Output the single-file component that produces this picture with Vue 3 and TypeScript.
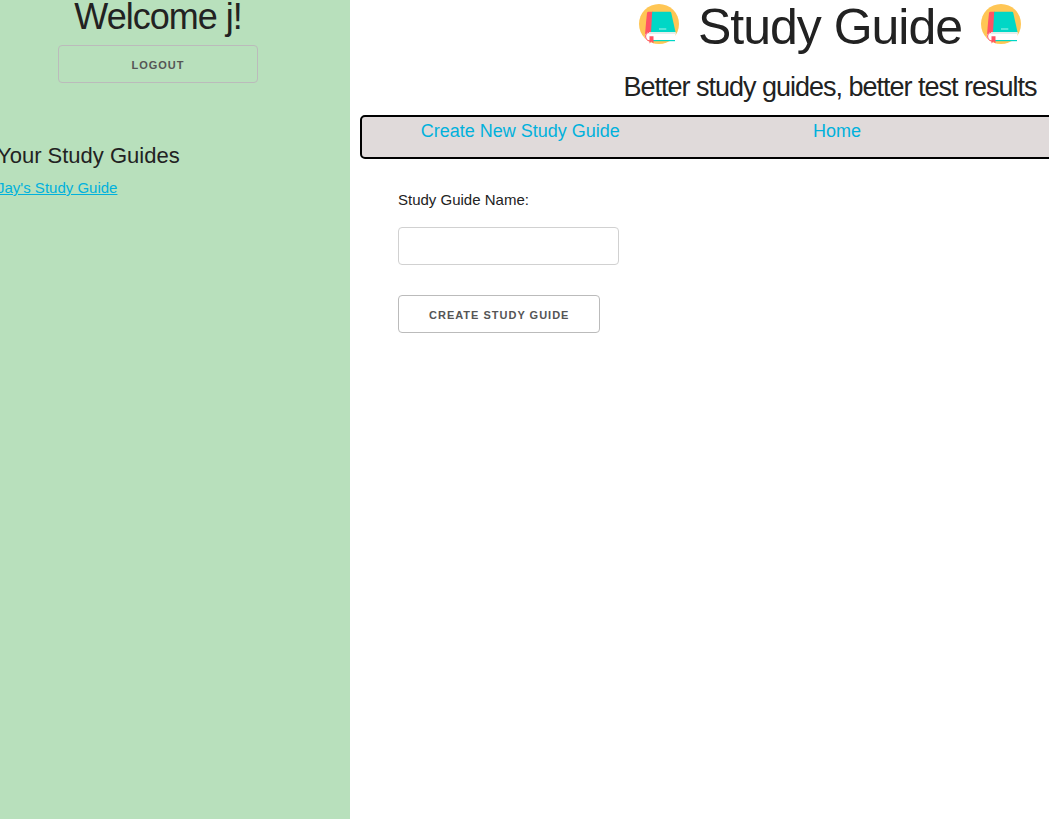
<script setup lang="ts">
import { ref } from 'vue'

const user = 'j'
const guides = ["Jay's Study Guide"]
const guideName = ref('')
</script>

<template>
  <div class="page">
    <svg class="defs" aria-hidden="true">
      <symbol id="book" viewBox="0 0 40 40">
        <circle cx="20" cy="20" r="20" fill="#ffc655" />
        <path d="M9.5 7.8H14V31H6Q7 18 8 9Q8.2 7.8 9.5 7.8Z" fill="#ff5364" />
        <path d="M13.2 7.8H31Q32 7.8 32.3 9L36.6 28.5H12Z" fill="#00d7c6" />
        <path d="M20 24.4h7.3v1.2H20z" fill="#8aeee4" />
        <path d="M10 28.2H36.6V36.6H10A4.2 4.2 0 0 1 10 28.2Z" fill="#fff" />
        <path d="M11 28.2H36.6V30H9Z" fill="#e4eeee" />
        <path d="M10 28.4Q6.6 28.6 6.6 32Q6.6 36.5 11 37" fill="none" stroke="#ff5364" stroke-width="1" />
        <path d="M13 36H36V37.2H13Z" fill="#00d7c6" />
        <path d="M10.5 32.2H14.5V39.4L12.5 37.6L10.5 39.4Z" fill="#ff5364" />
      </symbol>
    </svg>

    <aside class="sidebar">
      <div class="account">
        <h2>Welcome {{ user }}!</h2>
        <button type="button" class="logout">Logout</button>
      </div>
      <section class="guides">
        <h3>Your Study Guides</h3>
        <ul>
          <li v-for="guide in guides" :key="guide"><a href="#">{{ guide }}</a></li>
        </ul>
      </section>
    </aside>

    <main class="content">
      <header>
        <div class="brand">
          <svg class="logo" aria-hidden="true"><use href="#book" /></svg>
          <h1>Study Guide</h1>
          <svg class="logo" aria-hidden="true"><use href="#book" /></svg>
        </div>
        <p class="tagline">Better study guides, better test results</p>
      </header>
      <nav>
        <a href="#">Create New Study Guide</a>
        <a href="#">Home</a>
      </nav>
      <form @submit.prevent>
        <label for="guide-name">Study Guide Name:</label>
        <input id="guide-name" v-model="guideName" type="text" />
        <button type="submit">Create Study Guide</button>
      </form>
    </main>
  </div>
</template>

<style>
body {
  margin: 0;
  overflow-x: hidden;
}
</style>

<style scoped>
.page {
  display: flex;
  min-height: 100vh;
  overflow: hidden;
  background: #fff;
  color: #222;
  font: 15px/24px "Liberation Sans", Arial, sans-serif;
}
.defs {
  position: absolute;
  width: 0;
  height: 0;
}
h1, h2, h3, p, ul {
  margin: 0;
  padding: 0;
  font-weight: 400;
}
a {
  color: #00b1dc;
}
button, input {
  box-sizing: border-box;
  height: 38px;
  border: 1px solid #bbb;
  border-radius: 4px;
  background: transparent;
}
button {
  padding: 0 30px;
  color: #555;
  font: 600 11px/38px "Liberation Sans", Arial, sans-serif;
  letter-spacing: 1px;
  text-transform: uppercase;
  white-space: nowrap;
  cursor: pointer;
}
.sidebar {
  flex: 0 0 350px;
  box-sizing: border-box;
  background: #b8e0bc;
}
.account {
  display: flex;
  flex-direction: column;
  align-items: center;
  width: 316px;
}
h2 {
  font-size: 36px;
  line-height: 34px;
  letter-spacing: -1px;
}
.logout {
  width: 200px;
  margin-top: 11px;
}
.guides {
  margin: 55px 0 0 -3px;
}
h3 {
  font-size: 22px;
  line-height: 36px;
}
ul {
  list-style: none;
  margin-top: 2px;
}
.content {
  flex: 0 0 960px;
  min-width: 0;
}
.brand {
  display: flex;
  justify-content: center;
  gap: 19px;
}
.logo {
  width: 40px;
  height: 40px;
  margin-top: 4px;
}
h1 {
  font-size: 50px;
  line-height: 54px;
  letter-spacing: -1px;
}
.tagline {
  margin-top: 15px;
  font-size: 27px;
  line-height: 36px;
  letter-spacing: -1px;
  text-align: center;
}
nav {
  display: grid;
  grid-template-columns: repeat(3, 1fr);
  box-sizing: border-box;
  width: 954px;
  height: 44px;
  margin: 10px 0 0 10px;
  border: 2px solid #000;
  border-radius: 5px;
  background: #e0dada;
  text-align: center;
}
nav a {
  font-size: 18px;
  line-height: 28px;
  text-decoration: none;
}
form {
  display: flex;
  flex-direction: column;
  align-items: flex-start;
  margin: 29px 0 0 48px;
}
input {
  width: 221px;
  margin: 15px 0 30px;
  padding: 6px 10px;
  border-color: #d1d1d1;
  background: #fff;
  font: inherit;
}
</style>
